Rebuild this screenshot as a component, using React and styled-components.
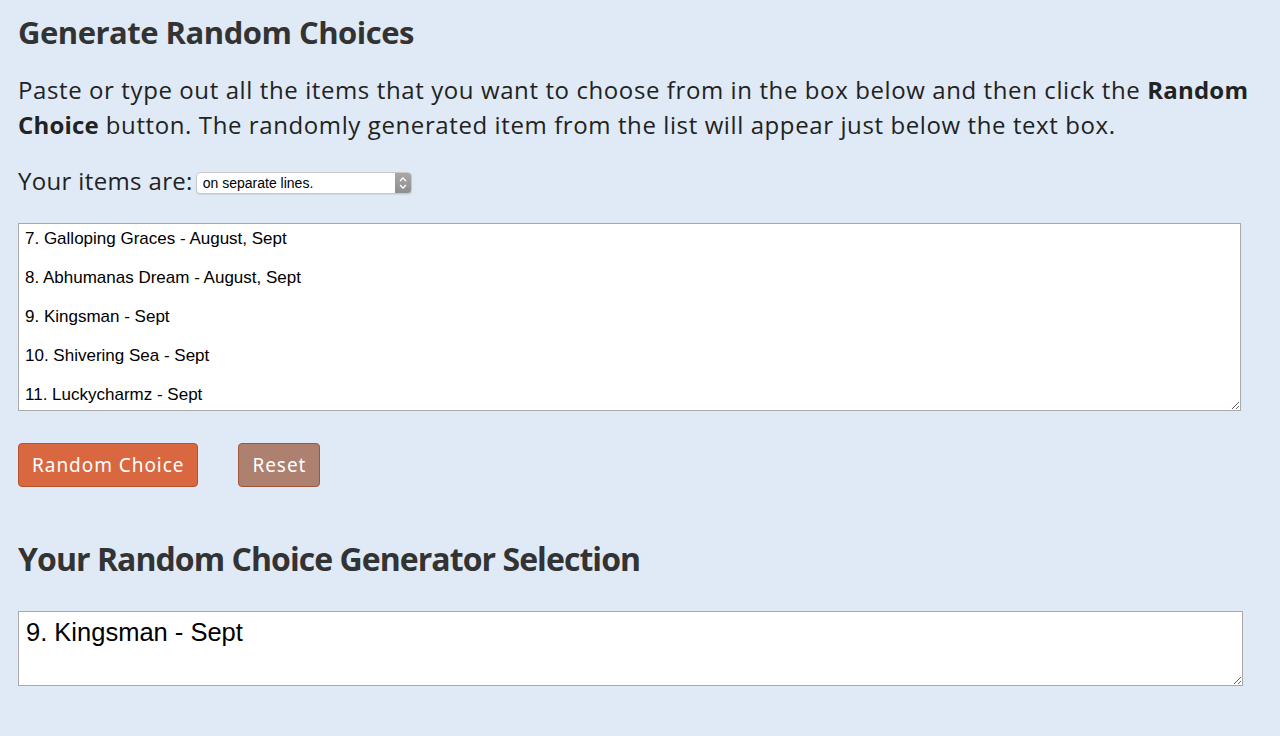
import React from 'react'
import styled, { createGlobalStyle } from 'styled-components'

const GlobalStyle = createGlobalStyle`
  html, body {
    margin: 0;
    padding: 0;
    background: #dfeaf6;
  }
  body {
    font-family: "Open Sans", "DejaVu Sans", sans-serif;
    color: #222;
  }
`

const Page = styled.div`
  padding: 0 30px 40px 18px;
`

const Title = styled.h1`
  margin: 0;
  padding-top: 12px;
  font-size: 31px;
  line-height: 40px;
  font-weight: 700;
  color: #333;
  letter-spacing: -0.5px;
`

const Intro = styled.p`
  margin: 20px 0 0;
  font-size: 24px;
  line-height: 35px;
  color: #222;
  letter-spacing: 0.6px;

  b {
    font-weight: 700;
    letter-spacing: 0.2px;
  }
`

const ItemsRow = styled.div`
  display: flex;
  align-items: center;
  gap: 3px;
  margin-top: 24px;
  font-size: 24px;
  line-height: 30px;
  letter-spacing: 0.35px;
`

const SelectWrap = styled.div`
  position: relative;
  width: 216px;
  height: 22px;
  margin-top: 3px;
`

const Select = styled.select`
  display: block;
  appearance: none;
  box-sizing: border-box;
  width: 100%;
  height: 100%;
  font-family: "Liberation Sans", Arial, sans-serif;
  font-size: 14px;
  letter-spacing: 0;
  padding: 0 20px 0 6px;
  border: 1px solid #c9c9c9;
  border-radius: 4px;
  background: #fff;
  color: #000;
  box-shadow: 0 1px 1px rgba(0, 0, 0, 0.08);
`

const Stepper = styled.span`
  position: absolute;
  top: 1px;
  right: 1px;
  bottom: 1px;
  width: 16px;
  display: flex;
  align-items: center;
  justify-content: center;
  background: linear-gradient(#a8a8a8, #8e8e8e);
  border-radius: 0 3px 3px 0;
  pointer-events: none;
`

const ListBox = styled.textarea`
  display: block;
  box-sizing: border-box;
  width: calc(100% - 9px);
  margin-top: 27px;
  height: 188px;
  padding: 5px 6px;
  font-family: "Liberation Sans", Arial, sans-serif;
  font-size: 17px;
  line-height: 19.5px;
  color: #000;
  background: #fff;
  border: 1px solid #a9a9a9;
  overflow: hidden;
  resize: vertical;
`

const Buttons = styled.div`
  display: flex;
  gap: 40px;
  margin-top: 32px;
`

const Button = styled.button`
  height: 44px;
  padding: 0 13px;
  font-family: "Noto Sans", "Open Sans", sans-serif;
  font-size: 19px;
  letter-spacing: 0.95px;
  color: #fff;
  background: ${p => (p.$muted ? '#ad806f' : '#d9673f')};
  border: 1px solid ${p => (p.$muted ? '#a0553d' : '#b9502c')};
  border-radius: 4px;
`

const Subtitle = styled.h2`
  margin: 50px 0 0;
  font-size: 32px;
  line-height: 44px;
  font-weight: 700;
  color: #333;
  letter-spacing: -0.95px;
`

const ResultBox = styled.textarea`
  display: block;
  box-sizing: border-box;
  width: calc(100% - 7px);
  margin-top: 30px;
  height: 75px;
  padding: 6px 7px;
  font-family: "Liberation Sans", Arial, sans-serif;
  font-size: 25.5px;
  line-height: 28px;
  color: #000;
  background: #fff;
  border: 1px solid #a9a9a9;
  overflow: hidden;
  resize: vertical;
`

const items = [
  '7. Galloping Graces - August, Sept',
  '8. Abhumanas Dream - August, Sept',
  '9. Kingsman - Sept',
  '10. Shivering Sea - Sept',
  '11. Luckycharmz - Sept',
]

export default function App() {
  return (
    <Page>
      <GlobalStyle />
      <Title>Generate Random Choices</Title>
      <Intro>
        Paste or type out all the items that you want to choose from in the box below and then click
        the <b>Random Choice</b> button. The randomly generated item from the list will appear just
        below the text box.
      </Intro>
      <ItemsRow>
        Your items are:
        <SelectWrap>
          <Select defaultValue="lines">
            <option value="lines">on separate lines.</option>
            <option value="commas">separated by commas.</option>
          </Select>
          <Stepper>
            <svg width="8" height="14" viewBox="0 0 8 14" fill="none" stroke="#fff" strokeWidth="1.3">
              <path d="M1 5 L4 2 L7 5" />
              <path d="M1 9 L4 12 L7 9" />
            </svg>
          </Stepper>
        </SelectWrap>
      </ItemsRow>
      <ListBox readOnly value={items.join('\n\n')} />
      <Buttons>
        <Button>Random Choice</Button>
        <Button $muted>Reset</Button>
      </Buttons>
      <Subtitle>Your Random Choice Generator Selection</Subtitle>
      <ResultBox readOnly value="9. Kingsman - Sept" />
    </Page>
  )
}
